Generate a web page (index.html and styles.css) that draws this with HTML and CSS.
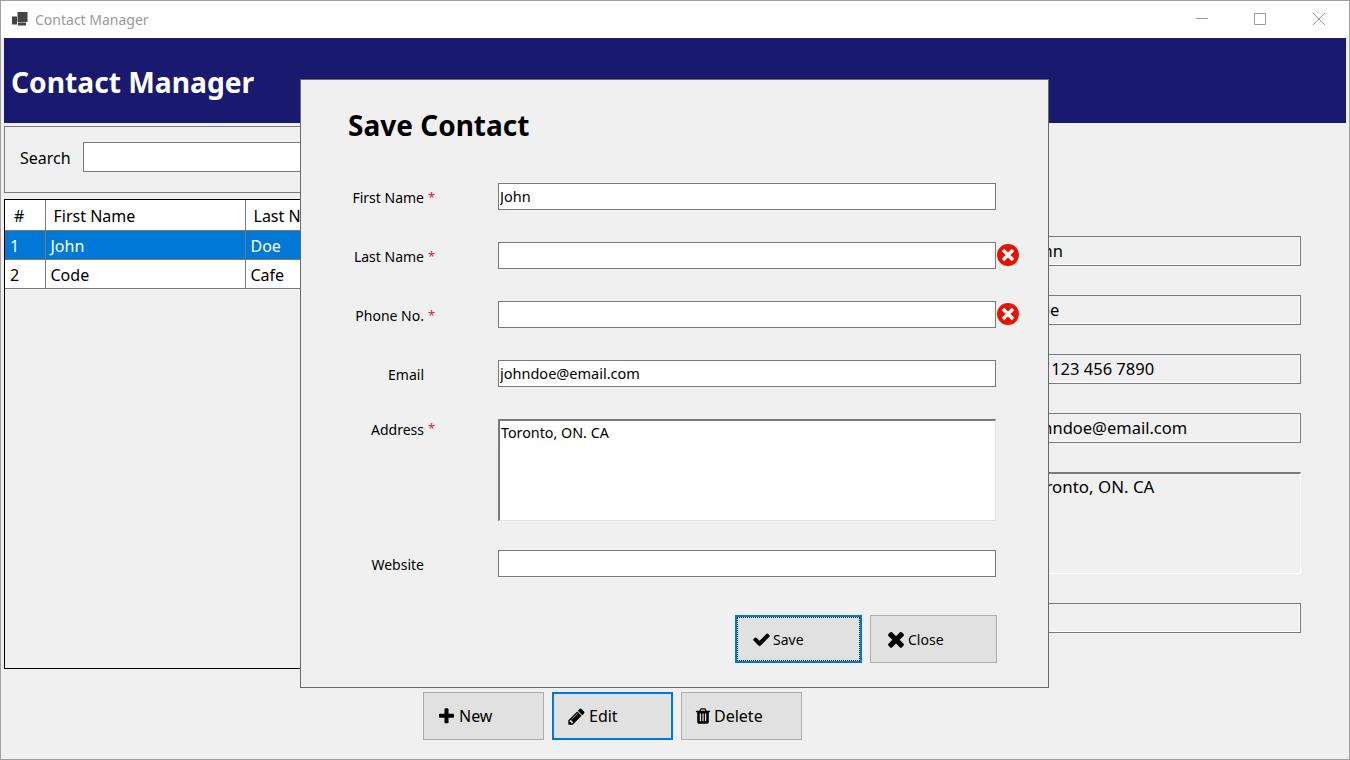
FILE: index.html
```html
<html>
  <head>
    <meta charset="utf-8">
    <title>Contact Manager</title>
    <link rel="stylesheet" href="styles.css">
  </head>
  <body>
    <div class="window">
      <div class="titlebar">
        <svg class="app-icon" viewBox="0 0 16 14"><path d="M5.500 0h10v10h-10zM0 4.500h5v8h-5zM6 10.500h8v3h-8z" fill="#444"/></svg>
        <span class="app-name">Contact Manager</span>
        <div class="controls">
          <svg viewBox="0 1 59 37"><path d="M24 18.500h12" stroke="#999" fill="none"/></svg>
          <svg viewBox="0 1 59 37"><path d="M23.500 13.500h11v11h-11z" stroke="#999" fill="none"/></svg>
          <svg viewBox="0 1 59 37"><path d="M23 13l12 12M35 13l-12 12" stroke="#999" fill="none"/></svg>
        </div>
      </div>
      <div class="header">Contact Manager</div>

      <div class="content">
        <div class="left">
          <div class="search">
            <label>Search</label>
            <input type="text" class="field search-box">
          </div>
          <div class="grid">
            <table>
              <colgroup><col class="col-id"><col class="col-first"><col class="col-last"><col></colgroup>
              <tr class="head"><th>#</th><th>First Name</th><th>Last Name</th><th>Phone No.</th></tr>
              <tr class="selected"><td>1</td><td>John</td><td>Doe</td><td>+1 123 456 7890</td></tr>
              <tr><td>2</td><td>Code</td><td>Cafe</td><td>123 456 7890</td></tr>
            </table>
          </div>
          <div class="toolbar">
            <button class="btn"><svg viewBox="0 0 1792 1792"><path d="M1600 736v192q0 40-28 68t-68 28h-416v416q0 40-28 68t-68 28h-192q-40 0-68-28t-28-68v-416h-416q-40 0-68-28t-28-68v-192q0-40 28-68t68-28h416v-416q0-40 28-68t68-28h192q40 0 68 28t28 68v416h416q40 0 68 28t28 68z"/></svg>New</button>
            <button class="btn default"><svg viewBox="0 0 1792 1792"><path d="M491 1536l91-91-235-235-91 91v107h128v128h107zm523-928q0-22-22-22-10 0-17 7l-542 542q-7 7-7 17 0 22 22 22 10 0 17-7l542-542q7-7 7-17zm-54-192l416 416-832 832h-416v-416zm683 96q0 53-37 90l-166 166-416-416 166-165q36-38 90-38 53 0 91 38l235 234q37 39 37 91z"/></svg>Edit</button>
            <button class="btn trash"><svg viewBox="0 0 1792 1792"><path d="M704 1376v-704q0-14-9-23t-23-9h-64q-14 0-23 9t-9 23v704q0 14 9 23t23 9h64q14 0 23-9t9-23zm256 0v-704q0-14-9-23t-23-9h-64q-14 0-23 9t-9 23v704q0 14 9 23t23 9h64q14 0 23-9t9-23zm256 0v-704q0-14-9-23t-23-9h-64q-14 0-23 9t-9 23v704q0 14 9 23t23 9h64q14 0 23-9t9-23zm-544-992h448l-48-117q-7-9-17-11h-317q-10 2-17 11zm928 32v64q0 14-9 23t-23 9h-96v948q0 83-47 143.500t-113 60.500h-832q-66 0-113-58.500t-47-141.500v-952h-96q-14 0-23-9t-9-23v-64q0-14 9-23t23-9h309l70-167q15-37 54-63t79-26h320q40 0 79 26t54 63l70 167h309q14 0 23 9t9 23z"/></svg>Delete</button>
          </div>
        </div>

        <div class="details">
          <input type="text" class="field detail" value="John" readonly>
          <input type="text" class="field detail" value="Doe" readonly>
          <input type="text" class="field detail" value="+1 123 456 7890" readonly>
          <input type="text" class="field detail" value="johndoe@email.com" readonly>
          <textarea class="detail-area" readonly>Toronto, ON. CA</textarea>
          <input type="text" class="field detail" readonly>
        </div>
      </div>

      <div class="dialog">
        <div class="dialog-title">Save Contact</div>

        <div class="row">
          <label>First Name</label><span class="req">*</span>
          <input type="text" class="field entry" value="John">
        </div>
        <div class="row">
          <label>Last Name</label><span class="req">*</span>
          <input type="text" class="field entry">
          <svg class="err" viewBox="0 0 22 22"><circle cx="11" cy="11" r="11" fill="#e51400"/><path d="M6 6l10 10M16 6l-10 10" stroke="#fff" stroke-width="3.500" fill="none"/></svg>
        </div>
        <div class="row">
          <label>Phone No.</label><span class="req">*</span>
          <input type="text" class="field entry">
          <svg class="err" viewBox="0 0 22 22"><circle cx="11" cy="11" r="11" fill="#e51400"/><path d="M6 6l10 10M16 6l-10 10" stroke="#fff" stroke-width="3.500" fill="none"/></svg>
        </div>
        <div class="row">
          <label>Email</label><span class="req"></span>
          <input type="text" class="field entry" value="johndoe@email.com">
        </div>
        <div class="row row-area">
          <label>Address</label><span class="req">*</span>
          <textarea class="entry-area">Toronto, ON. CA</textarea>
        </div>
        <div class="row">
          <label>Website</label><span class="req"></span>
          <input type="text" class="field entry">
        </div>

        <div class="dialog-buttons">
          <button class="btn small focused"><svg viewBox="0 0 1792 1792"><path d="M1671 566q0 40-28 68l-724 724-136 136q-28 28-68 28t-68-28l-136-136-362-362q-28-28-28-68t28-68l136-136q28-28 68-28t68 28l294 295 656-657q28-28 68-28t68 28l136 136q28 28 28 68z"/></svg>Save</button>
          <button class="btn small cross"><svg viewBox="0 0 1792 1792"><path d="M1490 1322q0 40-28 68l-136 136q-28 28-68 28t-68-28l-294-294-294 294q-28 28-68 28t-68-28l-136-136q-28-28-28-68t28-68l294-294-294-294q-28-28-28-68t28-68l136-136q28-28 68-28t68 28l294 294 294-294q28-28 68-28t68 28l136 136q28 28 28 68t-28 68l-294 294 294 294q28 28 28 68z"/></svg>Close</button>
        </div>
      </div>
    </div>
  </body>
</html>
```

FILE: styles.css
```css
* {
  box-sizing: border-box;
}

body {
  margin: 0;
  font-family: "Noto Sans", sans-serif;
  color: #000;
}

.window {
  position: relative;
  width: 1350px;
  height: 760px;
  border: 1px solid #a0a0a0;
  background: #f0f0f0;
  overflow: hidden;
}

.titlebar {
  display: flex;
  align-items: center;
  height: 37px;
  padding-left: 11px;
  background: #fff;
}
.app-icon {
  width: 16px;
  height: 14px;
  margin-right: 7px;
  margin-top: -2px;
}
.app-name {
  font-size: 14px;
  color: #999;
  margin-top: -1px;
}
.controls {
  display: flex;
  margin-left: auto;
  height: 37px;
}
.controls svg {
  width: 59px;
  height: 37px;
}

.header {
  height: 85px;
  margin: 0 3px;
  padding: 26px 0 0 7px;
  background: #191970;
  color: #fff;
  font-size: 28.200px;
  font-weight: bold;
  line-height: 36px;
}

.content {
  display: flex;
  padding: 0 3px;
}
.left {
  width: 640px;
}
.search {
  display: flex;
  align-items: center;
  height: 67px;
  margin-top: 3px;
  padding-left: 15px;
  border: 1px solid #7a7a7a;
  font-size: 16px;
}
.search label {
  width: 63px;
  margin-top: -4px;
}
.search-box {
  width: 500px;
  height: 30px;
  margin-top: -5px;
}

.field {
  border: 1px solid #7a7a7a;
  border-radius: 0;
  background: #fff;
  font-family: inherit;
  outline: none;
}

.grid {
  height: 470px;
  margin-top: 6px;
  border: 1px solid #000;
  overflow: hidden;
}
.grid table {
  width: 100%;
  table-layout: fixed;
  border-collapse: collapse;
  font-size: 16px;
}
.col-id {
  width: 40px;
}
.col-first {
  width: 200px;
}
.col-last {
  width: 200px;
}
.grid th, .grid td {
  height: 29px;
  padding: 2px 5px 0;
  border-right: 1px solid #7a7a7a;
  border-bottom: 1px solid #7a7a7a;
  background: #fff;
  font-weight: normal;
  text-align: left;
  white-space: nowrap;
}
.grid th {
  height: 30px;
  padding-left: 8px;
}
.grid th:first-child {
  padding-left: 9px;
}
.selected td {
  background: #0078d7;
  color: #fff;
}

.toolbar {
  display: flex;
  gap: 8px;
  margin-top: 23px;
  padding-left: 419px;
}

.btn {
  display: flex;
  flex: none;
  align-items: center;
  width: 121px;
  height: 48px;
  padding: 0 0 0 13px;
  border: 1px solid #adadad;
  background: #e1e1e1;
  font-family: inherit;
  font-size: 16px;
  color: #000;
}
.btn svg {
  flex: none;
  width: 19px;
  height: 19px;
  margin-right: 3px;
}
.btn.default {
  border: 2px solid #0078d7;
}
.btn.trash svg {
  width: 18px;
  height: 18px;
  margin-left: -1px;
  margin-right: 2px;
}
.btn.small {
  width: 127px;
  font-size: 14px;
  padding-left: 15px;
}
.btn.small svg {
  margin-right: 2px;
}
.btn.cross svg {
  width: 24px;
  height: 24px;
  margin-left: -2px;
  margin-right: 0;
}
.btn.focused {
  border: 2px solid #0078d7;
  outline: 1px dotted #000;
  outline-offset: -3px;
}

.details {
  display: flex;
  flex-direction: column;
  gap: 29px;
  width: 661px;
  padding-top: 113px;
  padding-right: 4px;
  align-items: flex-end;
}
.detail {
  width: 280px;
  height: 30px;
  padding: 0 3px 2px 6px;
  background: #f0f0f0;
  box-shadow: inset -1px -1px 0 #fff;
  font-size: 16.500px;
}
.detail-area {
  width: 280px;
  height: 102px;
  padding: 1px 3px 0 5px;
  border: 1px solid #fff;
  border-top: 2px solid #7a7a7a;
  background: #f0f0f0;
  font-family: inherit;
  font-size: 16.900px;
  resize: none;
  outline: none;
  overflow: hidden;
}

.dialog {
  position: absolute;
  left: 299px;
  top: 78px;
  width: 749px;
  height: 609px;
  padding: 19px 0 0 47px;
  border: 1px solid #696969;
  background: #f0f0f0;
}
.dialog-title {
  height: 52px;
  margin-bottom: 32px;
  font-size: 28px;
  font-weight: bold;
  line-height: 52px;
}

.row {
  display: flex;
  align-items: center;
  height: 27px;
  margin-bottom: 32px;
  font-size: 14px;
}
.row label {
  width: 76px;
  padding-top: 1px;
  text-align: right;
  white-space: nowrap;
}
.req {
  width: 74px;
  padding-left: 4px;
  color: #f0142c;
  font-size: 13px;
}
.entry {
  width: 498px;
  height: 27px;
  padding: 0 1px 2px;
  font-size: 14.500px;
}
.err {
  flex: none;
  width: 22px;
  height: 22px;
  margin-left: 1px;
  margin-top: -1px;
}
.row-area {
  align-items: flex-start;
  height: 102px;
  margin-bottom: 29px;
}
.entry-area {
  width: 498px;
  height: 102px;
  padding: 2px 1px 0;
  border: 2px solid;
  border-color: #7a7a7a #e3e3e3 #e3e3e3 #7a7a7a;
  border-right-width: 1px;
  border-bottom-width: 1px;
  background: #fff;
  font-family: inherit;
  font-size: 14.300px;
  resize: none;
  outline: none;
  overflow: hidden;
}

.dialog-buttons {
  display: flex;
  justify-content: flex-end;
  gap: 8px;
  width: 649px;
  margin-top: 38px;
}
```
